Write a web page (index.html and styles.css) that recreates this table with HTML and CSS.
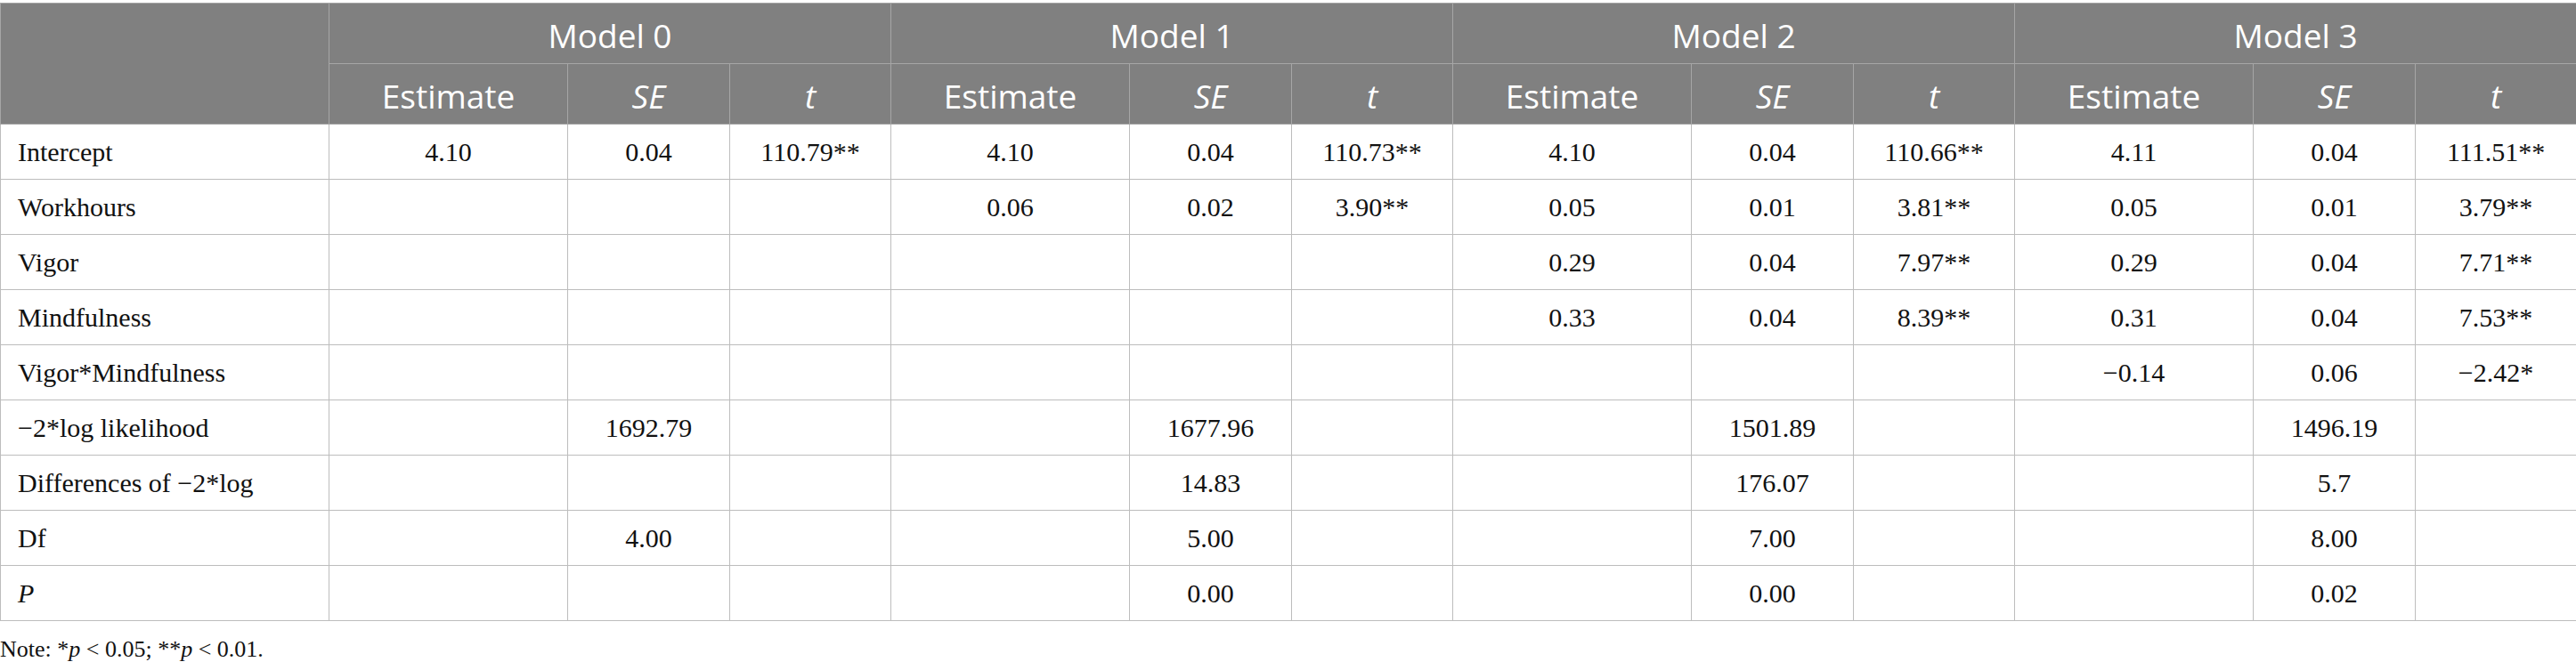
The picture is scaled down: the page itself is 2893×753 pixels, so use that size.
FILE: index.html
```html
<!DOCTYPE html>
<html lang="en">
<head>
<meta charset="utf-8">
<title>Multilevel models</title>
<link rel="stylesheet" href="styles.css">
</head>
<body>
<div class="wrap">
<table class="tbl">
  <colgroup>
    <col class="c-label">
    <col class="c-est"><col class="c-se"><col class="c-t">
    <col class="c-est"><col class="c-se"><col class="c-t">
    <col class="c-est"><col class="c-se"><col class="c-t">
    <col class="c-est"><col class="c-se"><col class="c-t">
  </colgroup>
  <thead>
    <tr class="h1">
      <th rowspan="2"></th>
      <th colspan="3">Model 0</th>
      <th colspan="3">Model 1</th>
      <th colspan="3">Model 2</th>
      <th colspan="3">Model 3</th>
    </tr>
    <tr class="h2">
      <th>Estimate</th><th><i>SE</i></th><th><i>t</i></th>
      <th>Estimate</th><th><i>SE</i></th><th><i>t</i></th>
      <th>Estimate</th><th><i>SE</i></th><th><i>t</i></th>
      <th>Estimate</th><th><i>SE</i></th><th><i>t</i></th>
    </tr>
  </thead>
  <tbody>
    <tr>
      <td class="lbl">Intercept</td>
      <td>4.10</td><td>0.04</td><td>110.79**</td>
      <td>4.10</td><td>0.04</td><td>110.73**</td>
      <td>4.10</td><td>0.04</td><td>110.66**</td>
      <td>4.11</td><td>0.04</td><td>111.51**</td>
    </tr>
    <tr>
      <td class="lbl">Workhours</td>
      <td></td><td></td><td></td>
      <td>0.06</td><td>0.02</td><td>3.90**</td>
      <td>0.05</td><td>0.01</td><td>3.81**</td>
      <td>0.05</td><td>0.01</td><td>3.79**</td>
    </tr>
    <tr>
      <td class="lbl">Vigor</td>
      <td></td><td></td><td></td>
      <td></td><td></td><td></td>
      <td>0.29</td><td>0.04</td><td>7.97**</td>
      <td>0.29</td><td>0.04</td><td>7.71**</td>
    </tr>
    <tr>
      <td class="lbl">Mindfulness</td>
      <td></td><td></td><td></td>
      <td></td><td></td><td></td>
      <td>0.33</td><td>0.04</td><td>8.39**</td>
      <td>0.31</td><td>0.04</td><td>7.53**</td>
    </tr>
    <tr>
      <td class="lbl">Vigor*Mindfulness</td>
      <td></td><td></td><td></td>
      <td></td><td></td><td></td>
      <td></td><td></td><td></td>
      <td>&minus;0.14</td><td>0.06</td><td>&minus;2.42*</td>
    </tr>
    <tr>
      <td class="lbl">&minus;2*log likelihood</td>
      <td></td><td>1692.79</td><td></td>
      <td></td><td>1677.96</td><td></td>
      <td></td><td>1501.89</td><td></td>
      <td></td><td>1496.19</td><td></td>
    </tr>
    <tr>
      <td class="lbl">Differences of &minus;2*log</td>
      <td></td><td></td><td></td>
      <td></td><td>14.83</td><td></td>
      <td></td><td>176.07</td><td></td>
      <td></td><td>5.7</td><td></td>
    </tr>
    <tr>
      <td class="lbl">Df</td>
      <td></td><td>4.00</td><td></td>
      <td></td><td>5.00</td><td></td>
      <td></td><td>7.00</td><td></td>
      <td></td><td>8.00</td><td></td>
    </tr>
    <tr>
      <td class="lbl"><i>P</i></td>
      <td></td><td></td><td></td>
      <td></td><td>0.00</td><td></td>
      <td></td><td>0.00</td><td></td>
      <td></td><td>0.02</td><td></td>
    </tr>
  </tbody>
</table>
<p class="note">Note: *<i>p</i> &lt; 0.05; **<i>p</i> &lt; 0.01.</p>
</div>
</body>
</html>
```

FILE: styles.css
```css
html, body {
  margin: 0;
  padding: 0;
  background: #ffffff;
}

.wrap {
  padding-top: 3px;
}

.tbl {
  width: 2893px;
  border-collapse: collapse;
  table-layout: fixed;
  font-family: "Liberation Serif", "Times New Roman", serif;
  font-size: 30px;
  color: #111111;
}

.c-label { width: 369px; }
.c-est { width: 268px; }
.c-se { width: 182px; }
.c-t { width: 181px; }

.tbl th {
  background: #808080;
  color: #ffffff;
  font-family: "Open Sans", "Noto Sans", sans-serif;
  font-weight: 400;
  font-size: 37px;
  text-align: center;
  border: 1px solid #a6a6a6;
  padding: 3px 8px 0 8px;
  height: 64px;
  line-height: 1;
}

.tbl td {
  border: 1px solid #bdbdbd;
  text-align: center;
  padding: 0 8px;
  height: 61px;
  line-height: 1.2;
  white-space: nowrap;
}

.tbl td.lbl {
  text-align: left;
  padding-left: 19px;
}

.note {
  margin: 17px 0 0 0;
  font-family: "Liberation Serif", "Times New Roman", serif;
  font-size: 26px;
  color: #111111;
}
```
